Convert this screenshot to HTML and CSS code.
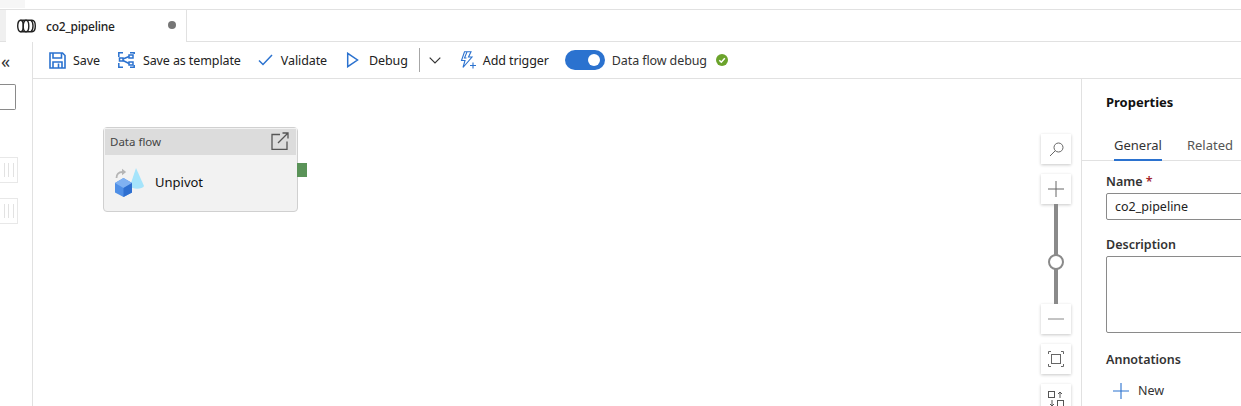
FILE: index.html

```html
<!DOCTYPE html>
<html lang="en">
<head>
  <meta charset="UTF-8" />
  <title>co2_pipeline</title>
  <link rel="stylesheet" href="styles.css">
</head>
<body>
  <div class="topstrip"><div class="topstrip-fill"></div></div>
  <div class="tabbar">
    <div class="tab-gutter"></div>
    <div class="tab">
      <svg class="tab-icon" width="19" height="14" viewBox="0 0 19 14" fill="none" stroke="#222" stroke-width="1.4">
        <ellipse cx="3.500" cy="7" rx="2.800" ry="5.800" />
        <ellipse cx="9" cy="7" rx="2.800" ry="5.800" />
        <path d="M3.500 1.200h11.500c2 0 3.300 2.500 3.300 5.800s-1.300 5.800-3.300 5.800H3.500M14 1.500c1.500 1 2 3 2 5.500s-.5 4.500-2 5.500" />
      </svg>
      <span class="tab-name">co2_pipeline</span>
      <span class="tab-dot"></span>
    </div>
  </div>

  <div class="main">
    <div class="sidebar">
      <div class="collapse">«</div>
      <div class="search-box"></div>
      <div class="side-item"><i></i><i></i><i></i></div>
      <div class="side-item"><i></i><i></i><i></i></div>
    </div>

    <div class="work">
      <div class="toolbar">
        <div class="tool tool-save">
          <svg width="17" height="17" viewBox="0 0 17 17" fill="none" stroke="#2b72cf" stroke-width="1.600">
            <path d="M1 1h12.500L16 3.500V16H1z" />
            <path d="M4 1v5h8.500V1M4 16v-6h9v6M9.500 11.500V16" />
          </svg>
          <span>Save</span>
        </div>
        <div class="tool tool-template">
          <svg width="17" height="16" viewBox="0 0 17 16" fill="none" stroke="#2b72cf" stroke-width="1.500">
            <path d="M5 .8H.8V5M12 .8h4.200V2M.8 11v4.200H5M16.200 13v2.200H12" />
            <rect x="1.500" y="6" width="3.500" height="3" />
            <rect x="11" y="3" width="4" height="3" />
            <rect x="11" y="10" width="4" height="3" />
            <path d="M5 7l6-2.500M5 8.500l6 3" />
          </svg>
          <span>Save as template</span>
        </div>
        <div class="tool tool-validate">
          <svg width="15" height="12" viewBox="0 0 15 12" fill="none" stroke="#2b72cf" stroke-width="1.500">
            <path d="M1 6.500l4 4L14 1" />
          </svg>
          <span>Validate</span>
        </div>
        <div class="tool tool-debug">
          <svg width="13" height="16" viewBox="0 0 13 16" fill="none" stroke="#2b72cf" stroke-width="1.500">
            <path d="M1.700 1.300v13.400L11.500 8z" />
          </svg>
          <span>Debug</span>
        </div>
        <div class="tool-sep"></div>
        <svg class="chev" width="12" height="7" viewBox="0 0 12 7" fill="none" stroke="#333" stroke-width="1.200">
          <path d="M.7.700L6 6l5.300-5.300" />
        </svg>
        <div class="tool tool-trigger">
          <svg width="16" height="18" viewBox="0 0 16 18" fill="none" stroke="#2b72cf" stroke-width="1.100">
            <path d="M4.500.7h6.500L8.500 6H12L3 16.500 5 9.500H1.500zM7 .9L4.500 7h2M13 11.500v6M10 14.500h6" />
          </svg>
          <span>Add trigger</span>
        </div>
        <div class="toggle"><span class="knob"></span></div>
        <span class="toggle-label">Data flow debug</span>
        <svg class="ok" width="12" height="12" viewBox="0 0 12 12">
          <circle cx="6" cy="6" r="6" fill="#6ba32b" />
          <path d="M3.300 6.200l2 2 3.500-4" fill="none" stroke="#fff" stroke-width="1.500" />
        </svg>
      </div>

      <div class="body">
        <div class="canvas">
          <div class="node">
            <div class="node-head">
              <span>Data flow</span>
              <svg width="18" height="18" viewBox="0 0 18 18" fill="none" stroke="#555" stroke-width="1.300">
                <path d="M9 2.500H1v15h15V9.500M7 11L17 1M11.500 1H17v5.500" />
              </svg>
            </div>
            <div class="node-body">
              <svg width="29" height="29" viewBox="0 0 29 29">
                <path d="M1.500 10c0-3.500 2-6 6-6" fill="none" stroke="#b5b5b5" stroke-width="1.800" />
                <path d="M7 .8l4.200 3.200L7 7.200z" fill="#b5b5b5" />
                <path d="M21 0l8 18c-1.500 3.500-12 3.500-14 0z" fill="#a5e4fb" />
                <path d="M8.500 10L17 15v9.500L8.500 29 0 24.500V15z" fill="#4f8fe6" />
                <path d="M8.500 10L17 15l-8.500 5L0 15z" fill="#7fb1f2" />
                <path d="M8.500 20L17 15v9.500L8.500 29z" fill="#2e6fd0" />
              </svg>
              <span>Unpivot</span>
            </div>
            <div class="node-port"></div>
          </div>

          <div class="zoom-rail">
            <div class="zoom-btn">
              <svg width="15" height="15" viewBox="0 0 15 15" fill="none" stroke="#666" stroke-width="1">
                <circle cx="9.500" cy="5.500" r="4.500" />
                <path d="M6.300 8.700L1 14" />
              </svg>
            </div>
            <div class="zoom-slider">
              <div class="zoom-btn">
                <svg width="16" height="16" viewBox="0 0 16 16" stroke="#666" stroke-width="1"><path d="M8 0v16M0 8h16" /></svg>
              </div>
              <div class="zoom-track"><span class="zoom-thumb"></span></div>
              <div class="zoom-btn">
                <svg width="16" height="2" viewBox="0 0 16 2" stroke="#888" stroke-width="1"><path d="M0 1h16" /></svg>
              </div>
            </div>
            <div class="zoom-btn">
              <svg width="16" height="16" viewBox="0 0 16 16" fill="none" stroke="#666" stroke-width="1">
                <rect x="3.500" y="3.500" width="9" height="9" />
                <path d="M.5 3V.5H3M13 .5h2.500V3M.5 13v2.500H3M15.500 13v2.500H13" />
              </svg>
            </div>
            <div class="zoom-btn">
              <svg width="16" height="16" viewBox="0 0 16 16" fill="none" stroke="#555" stroke-width="1">
                <rect x=".5" y=".5" width="6" height="6" />
                <rect x="9.500" y="9.500" width="6" height="6" />
                <path d="M12 7V1M10 3l2-2 2 2M4 9v6M2 13l2 2 2-2" />
              </svg>
            </div>
          </div>
        </div>

        <div class="props">
          <h3 class="props-title">Properties</h3>
          <div class="props-tabs">
            <span class="props-tab active">General</span>
            <span class="props-tab">Related</span>
          </div>
          <div class="form">
            <label class="field-label">Name <em>*</em></label>
            <div class="text-input">co2_pipeline</div>
            <label class="field-label desc-label">Description</label>
            <div class="text-area"></div>
            <label class="field-label anno-label">Annotations</label>
            <div class="new-btn">
              <svg width="16" height="16" viewBox="0 0 16 16" stroke="#2b72cf" stroke-width="1.100"><path d="M8 0v16M0 8h16" /></svg>
              <span>New</span>
            </div>
          </div>
        </div>
      </div>
    </div>
  </div>
</body>
</html>
```

FILE: styles.css

```css
* { box-sizing: border-box; }
html, body { height: 100%; }
body { margin: 0; height: 406px; overflow: hidden; background: #fff; color: #222; font-family: "Noto Sans", "Open Sans", sans-serif; font-size: 13px; display: flex; flex-direction: column; }

.topstrip { height: 10px; flex: none; border-bottom: 1px solid #e1e1e1; }
.topstrip-fill { width: 25px; height: 8px; background: #f6f6f6; }

.tabbar { height: 32px; flex: none; display: flex; border-bottom: 1px solid #e1e1e1; }
.tab-gutter { width: 6px; background: #f0f0f0; }
.tab { width: 181px; height: 32px; display: flex; align-items: center; padding-left: 11px; background: #fff; border-right: 1px solid #e1e1e1; }
.tab-icon { margin-right: 10px; }
.tab-name { flex: 1; font-size: 12px; font-weight: 500; letter-spacing: -0.2px; color: #222; }
.tab-dot { width: 8px; height: 8px; border-radius: 50%; background: #767676; margin-right: 10px; margin-bottom: 2px; }

.main { flex: 1; display: flex; min-height: 0; }

.sidebar { width: 33px; flex: none; border-right: 1px solid #e1e1e1; overflow: hidden; }
.collapse { height: 20px; margin-top: 9px; padding-left: 1px; font-size: 18px; line-height: 20px; color: #333; }
.search-box { width: 16px; height: 26px; margin-top: 13px; border: 1px solid #8a8a8a; border-left: none; border-radius: 0 2px 2px 0; }
.side-item { width: 18px; height: 26px; margin-top: 15px; display: flex; gap: 4px; justify-content: flex-end; padding: 5px 4px; border: 1px solid #e8e8e8; border-left: none; }
.search-box + .side-item { margin-top: 47px; }
.side-item i { width: 1px; background: #e2e2e2; }

.work { flex: 1; min-width: 0; display: flex; flex-direction: column; }

.toolbar { height: 37px; flex: none; display: flex; align-items: center; padding-left: 16px; border-bottom: 1px solid #e1e1e1; font-size: 12.500px; letter-spacing: -0.1px; }
.tool { display: flex; align-items: center; gap: 8px; margin-right: 18px; white-space: nowrap; }
.tool-save { gap: 7px; margin-right: 18px; }
.tool-template { gap: 8px; margin-right: 17px; }
.tool-validate { margin-right: 19px; }
.tool-debug { gap: 10px; margin-right: 11px; }
.tool-trigger { gap: 7px; margin-left: 19px; margin-right: 16px; }
.tool-sep { width: 1px; height: 24px; background: #a6a6a6; }
.chev { margin-left: 9px; }
.toggle { width: 40px; height: 20px; flex: none; border-radius: 10px; background: #2b72cf; position: relative; }
.knob { position: absolute; right: 5px; top: 4px; width: 12px; height: 12px; border-radius: 50%; background: #fff; }
.toggle-label { margin-left: 7px; color: #333; }
.ok { margin-left: 9px; }

.body { flex: 1; display: flex; min-height: 0; }
.canvas { flex: 1; position: relative; overflow: hidden; }

.node { position: absolute; left: 70px; top: 48px; width: 195px; height: 85px; background: #f2f2f2; border: 1px solid #d0d0d0; border-radius: 4px; }
.node-head { height: 27px; display: flex; align-items: center; justify-content: space-between; padding: 0 7px 2px 5px; background: #dcdcdc; border: 1px solid #f2f2f2; border-bottom: none; font-size: 11.500px; color: #444; }
.node-body { height: 54px; display: flex; align-items: center; gap: 11px; padding-left: 11px; font-size: 13px; color: #111; }
.node-port { position: absolute; right: -10px; top: 35px; width: 10px; height: 14px; background: #5a9358; }

.zoom-rail { position: absolute; left: 1008px; top: 55px; width: 30px; display: flex; flex-direction: column; gap: 10px; }
.zoom-slider { display: flex; flex-direction: column; }
.zoom-btn { width: 30px; height: 30px; flex: none; display: flex; align-items: center; justify-content: center; background: #fff; box-shadow: 0 1px 3px rgba(0,0,0,0.22); }
.zoom-track { height: 100px; width: 4px; margin: 0 auto; background: #8a8a8a; position: relative; }
.zoom-thumb { position: absolute; left: -6px; top: 50px; width: 16px; height: 16px; border-radius: 50%; background: #fff; border: 2px solid #8a8a8a; }

.props { width: 160px; flex: none; border-left: 1px solid #e1e1e1; overflow: hidden; }
.props-title { margin: 0; padding: 14px 0 0 24px; height: 46px; font-size: 13px; font-weight: 700; color: #111; line-height: 18px; }
.props-tabs { height: 36px; display: flex; gap: 25px; padding-left: 32px; border-bottom: 1px solid #e1e1e1; white-space: nowrap; }
.props-tab { height: 36px; padding-top: 11px; line-height: 18px; color: #555; }
.props-tab.active { color: #333; border-bottom: 2px solid #2b72cf; }

.form { padding: 12px 0 0 24px; }
.field-label { display: block; font-size: 12.500px; font-weight: 600; color: #333; line-height: 18px; }
.field-label em { color: #a4262c; font-style: normal; }
.text-input { width: 160px; height: 27px; margin-top: 2px; padding: 0 8px; line-height: 25px; font-size: 12.500px; border: 1px solid #8a8a8a; border-radius: 2px; }
.text-area { width: 160px; height: 77px; margin-top: 2px; border: 1px solid #8a8a8a; border-radius: 2px; }
.desc-label { margin-top: 16px; }
.anno-label { margin-top: 18px; }
.new-btn { display: flex; align-items: center; gap: 9px; margin-top: 13px; padding-left: 7px; font-size: 12.500px; color: #333; }
```
